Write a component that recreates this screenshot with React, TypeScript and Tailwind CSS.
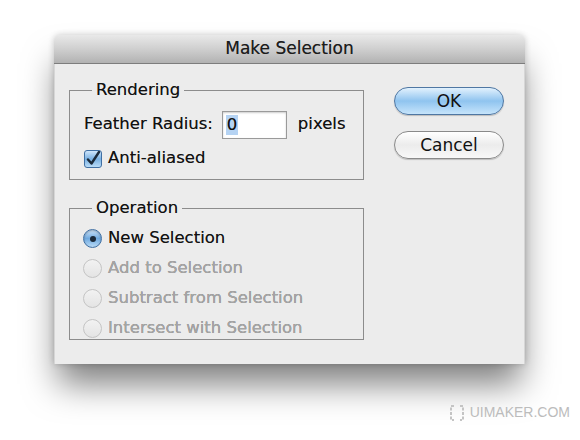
import React from 'react';

const font = { fontFamily: '"DejaVu Sans", "Liberation Sans", sans-serif' };

const Radio = ({ checked, disabled, label }: { checked?: boolean; disabled?: boolean; label: string }) => (
  <div className="flex items-center h-[30px] gap-[6px]">
    {checked ? (
      <span className="w-[19px] h-[19px] rounded-full border border-[#3f6fa3] bg-gradient-to-b from-[#cfe6fb] via-[#6fa9df] to-[#b9dcf8] flex items-center justify-center shadow-[inset_0_1px_2px_rgba(0,0,0,0.25)]">
        <span className="w-[6px] h-[6px] rounded-full bg-[#1b2a3a]" />
      </span>
    ) : (
      <span className="w-[19px] h-[19px] rounded-full border border-[#c4c4c4] bg-gradient-to-b from-[#f2f2f2] to-[#e4e4e4]" />
    )}
    <span className={disabled ? 'text-[#a5a5a5]' : 'text-[#111]'}>{label}</span>
  </div>
);

const Group = ({ title, className, children }: { title: string; className: string; children: React.ReactNode }) => (
  <fieldset className={`border border-[#8c8c8c] w-[295px] ${className}`}>
    <legend className="px-[4px] text-[#111] leading-none">{title}</legend>
    {children}
  </fieldset>
);

export default function App() {
  return (
    <div className="w-[580px] h-[440px] bg-white overflow-hidden pt-[35px] pl-[54px] text-[16.5px] [text-shadow:0_0_0.3px_rgba(0,0,0,0.5)]" style={font}>
      <div className="w-[471px] h-[329px] bg-[#ececec] rounded-t-[6px] flex flex-col shadow-[0_24px_34px_-4px_rgba(0,0,0,0.5),0_0_6px_rgba(0,0,0,0.2)]">
        <div className="h-[29px] rounded-t-[6px] bg-gradient-to-b from-[#e9e9e9] via-[#cfcfcf] to-[#b2b2b2] border-b border-[#7d7d7d] flex items-center justify-center text-[17px] text-[#1c1c1c]">
          Make Selection
        </div>
        <div className="flex-1 flex pl-[14px] pt-[18px] border-l border-r border-[#d6d6d6]">
          <div className="flex flex-col">
            <Group title="Rendering" className="h-[98px] px-[14px] pt-[12px] [&>legend]:ml-[8px]">
              <div className="flex items-center gap-[9px] h-[28px] whitespace-nowrap">
                <span className="text-[#111]">Feather Radius:</span>
                <div className="w-[65px] h-[28px] bg-white border border-[#9a9a9a] shadow-[inset_0_1px_2px_rgba(0,0,0,0.2)] flex items-center pl-[3px]">
                  <span className="bg-[#b5d3f3] text-[#111] px-[1px] leading-[20px]">0</span>
                </div>
                <span className="ml-[2px] text-[#111]">pixels</span>
              </div>
              <div className="flex items-center gap-[6px] h-[28px] mt-[6px]">
                <span className="w-[18px] h-[18px] rounded-[3px] border border-[#3f6fa3] bg-gradient-to-b from-[#cfe6fb] via-[#78b0e2] to-[#b9dcf8] flex items-center justify-center">
                  <svg width="16" height="16" viewBox="0 0 16 16">
                    <path d="M3 8.5 L6.5 12.5 L14 1" fill="none" stroke="#1b2a3a" strokeWidth="2.4" strokeLinecap="round" strokeLinejoin="round" />
                  </svg>
                </span>
                <span className="text-[#111]">Anti-aliased</span>
              </div>
            </Group>
            <Group title="Operation" className="h-[140px] mt-[20px] px-[13px] pt-[7px] [&>legend]:ml-[9px]">
              <Radio checked label="New Selection" />
              <Radio disabled label="Add to Selection" />
              <Radio disabled label="Subtract from Selection" />
              <Radio disabled label="Intersect with Selection" />
            </Group>
          </div>
          <div className="flex flex-col ml-[30px] pt-[5px] gap-[16px]">
            <button className="w-[110px] h-[28px] rounded-full border border-[#4f77a3] bg-gradient-to-b from-[#e2f1fd] via-[#8fc4ef] to-[#c6e4fb] text-[17px] text-[#111] leading-none shadow-[0_1px_1px_rgba(0,0,0,0.2)]">
              OK
            </button>
            <button className="w-[110px] h-[28px] rounded-full border border-[#8a8a8a] bg-gradient-to-b from-[#ffffff] via-[#ececec] to-[#f8f8f8] text-[17px] text-[#111] leading-none shadow-[0_1px_1px_rgba(0,0,0,0.2)]">
              Cancel
            </button>
          </div>
        </div>
      </div>
      <div className="flex items-center justify-end gap-[6px] mt-[38px] pr-[10px] text-[14px] text-[#bcbcbc] [text-shadow:none]" style={{ fontFamily: '"Liberation Sans", sans-serif' }}>
        <svg width="14" height="16" viewBox="0 0 14 16">
          <path d="M4 1 H1 V15 H4 M10 1 H13 V15 H10" fill="none" stroke="#c4c4c4" strokeWidth="2" strokeDasharray="3 1.5" />
        </svg>
        <span>UIMAKER.COM</span>
      </div>
    </div>
  );
}
